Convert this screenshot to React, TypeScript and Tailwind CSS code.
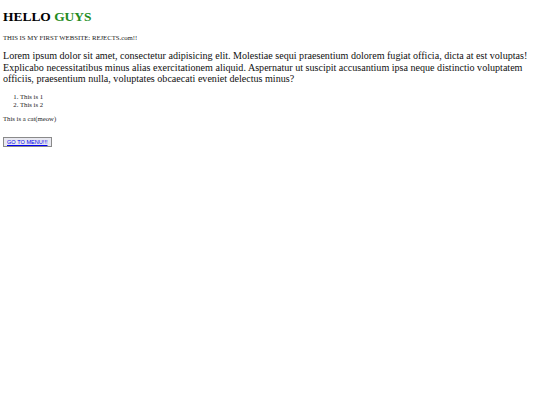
import React from 'react';

export default function App() {
  return (
    <div className="min-h-[405px] bg-white px-[3px] text-black" style={{ fontFamily: '"Liberation Serif", serif' }}>
      <h1 className="pt-[9px] text-[13.44px] font-bold leading-[15.5px]">
        HELLO <span className="text-[#228b22]">GUYS</span>
      </h1>
      <p className="mt-[9.5px] text-[6.72px] leading-[7.7px] text-[#222]">THIS IS MY FIRST WEBSITE: REJECTS.com!!</p>
      <p className="mt-[8.5px] text-[10.08px] leading-[11.6px] text-[#111]">
        Lorem ipsum dolor sit amet, consectetur adipisicing elit. Molestiae sequi praesentium dolorem fugiat officia, dicta at est voluptas! Explicabo necessitatibus minus alias exercitationem aliquid. Aspernatur ut suscipit accusantium ipsa neque distinctio voluptatem officiis, praesentium nulla, voluptates obcaecati eveniet delectus minus?
      </p>
      <ol className="mt-[8.5px] list-decimal pl-[17px] text-[6.72px] leading-[7.3px] text-[#222]">
        <li>This is 1</li>
        <li>This is 2</li>
      </ol>
      <p className="mt-[7px] text-[6.72px] leading-[7.7px] text-[#222]">This is a cat(meow)</p>
      <div className="mt-[14.5px] flex">
        <button
          className="border border-[#8a8a8a] bg-[#e8e8f0] px-[3px] py-[1px] text-[5.6px] leading-[6px] text-[#0000ee] underline"
          style={{ fontFamily: '"Liberation Sans", Arial, sans-serif' }}
        >
          GO TO MENU!!!
        </button>
      </div>
    </div>
  );
}
